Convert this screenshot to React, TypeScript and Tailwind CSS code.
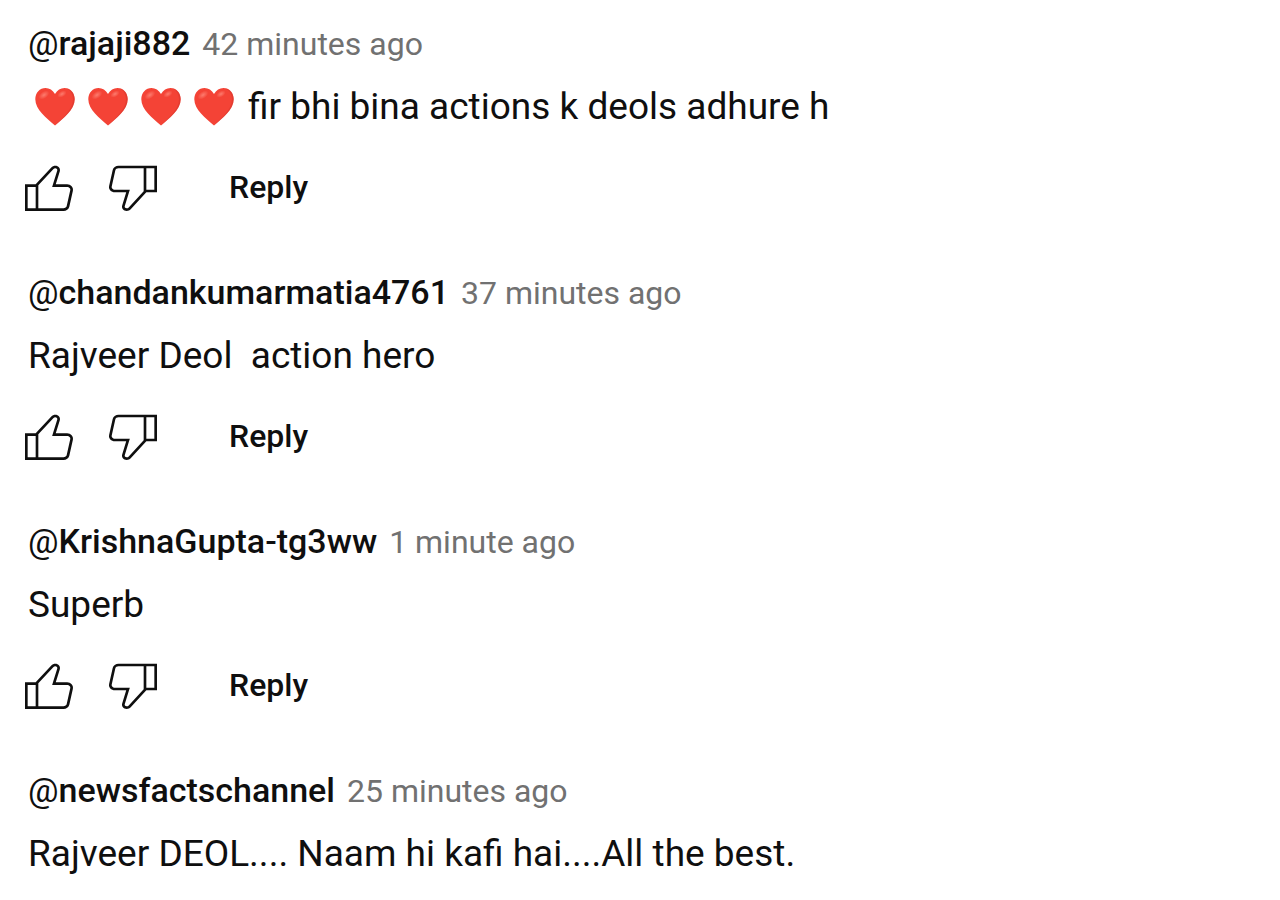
interface Comment {
  author: string;
  time: string;
  text: string;
  hearts?: number;
  showActions?: boolean;
}

const comments: Comment[] = [
  {
    author: "rajaji882",
    time: "42 minutes ago",
    text: "fir bhi bina actions k deols adhure h",
    hearts: 4,
  },
  {
    author: "chandankumarmatia4761",
    time: "37 minutes ago",
    text: "Rajveer Deol  action hero",
  },
  { author: "KrishnaGupta-tg3ww", time: "1 minute ago", text: "Superb" },
  {
    author: "newsfactschannel",
    time: "25 minutes ago",
    text: "Rajveer DEOL.... Naam hi kafi hai....All the best.",
    showActions: false,
  },
];

function HeartIcon() {
  return (
    <svg viewBox="0 0 40 38" className="h-[38px] w-10" aria-hidden="true">
      <defs>
        <radialGradient id="heart-shine" cx="0.5" cy="0.5" r="0.5">
          <stop offset="0" stopColor="#ff8a7c" stopOpacity="0.8" />
          <stop offset="1" stopColor="#ff8a7c" stopOpacity="0" />
        </radialGradient>
      </defs>
      <path
        fill="#f44336"
        d="M20 6C17.8 2 14.4 0 10.6 0 4.8 0 .3 4.8 .3 11.2c0 10.6 11.4 18.8 19.7 26.3 8.3-7.5 19.7-15.7 19.7-26.3C39.7 4.8 35.2 0 29.4 0 25.6 0 22.2 2 20 6z"
      />
      <path
        fill="#d8392f"
        d="M31 .2C36 .9 39.7 5.3 39.7 11.2c0 10.6-11.4 18.8-19.7 26.3 7-7.5 18-15.7 18-26.3C38 6 35 1.7 31 .2z"
        opacity="0.6"
      />
      <ellipse cx="9" cy="7" rx="6" ry="3.5" fill="url(#heart-shine)" transform="rotate(-35 9 7)" />
      <ellipse cx="27" cy="6" rx="5" ry="3" fill="url(#heart-shine)" transform="rotate(-30 27 6)" />
    </svg>
  );
}

function LikeIcon() {
  return (
    <svg viewBox="0 0 24 24" className="size-16" fill="currentColor" aria-hidden="true">
      <path d="M18.77,11h-4.23l1.52-4.94C16.38,5.03,15.54,4,14.38,4c-0.58,0-1.14,0.24-1.52,0.65L7,11H3v10h4h1h9.43c1.06,0,1.98-0.67,2.19-1.61l1.34-6C21.23,12.15,20.18,11,18.77,11z M7,20H4v-8h3V20z M19.98,13.17l-1.34,6C18.54,19.65,18.03,20,17.43,20H8v-8.61l5.6-6.06C13.79,5.12,14.08,5,14.38,5c0.26,0,0.5,0.11,0.63,0.3c0.07,0.1,0.15,0.26,0.09,0.47l-1.52,4.94L13.18,12h1.35h4.23c0.41,0,0.8,0.17,1.03,0.46C19.92,12.61,20.05,12.86,19.98,13.17z" />
    </svg>
  );
}

function DislikeIcon() {
  return (
    <svg viewBox="0 0 24 24" className="size-16" fill="currentColor" aria-hidden="true">
      <path d="M17,4h-1H6.57C5.5,4,4.59,4.67,4.38,5.61l-1.34,6C2.77,12.85,3.82,14,5.23,14h4.23l-1.52,4.94C7.62,19.97,8.46,21,9.62,21c0.58,0,1.14-0.24,1.52-0.65L17,14h4V4H17z M10.4,19.67C10.21,19.88,9.92,20,9.62,20c-0.26,0-0.5-0.11-0.63-0.3c-0.07-0.1-0.15-0.26-0.09-0.47l1.52-4.94L10.82,13H5.23c-0.41,0-0.8-0.17-1.03-0.46c-0.12-0.15-0.25-0.4-0.18-0.72l1.34-6C5.46,5.35,5.97,5,6.57,5H16v8.61L10.4,19.67z M20,13h-3V5h3V13z" />
    </svg>
  );
}

function CommentItem({ author, time, text, hearts = 0, showActions = true }: Comment) {
  return (
    <article>
      <header className="flex items-baseline gap-3 px-7 leading-10">
        <a href={`#${author}`} className="text-[34px] font-medium">
          <span className="font-normal">@</span>
          {author}
        </a>
        <span className="text-[32px] text-[#717171]">{time}</span>
      </header>
      <div className="mt-[17px] flex items-center px-7">
        {hearts > 0 && (
          <span className="mr-[14px] ml-[7px] flex gap-[13px]" role="img" aria-label="Red hearts">
            {Array.from({ length: hearts }, (_, i) => (
              <HeartIcon key={i} />
            ))}
          </span>
        )}
        <p className="text-[37px] leading-[52px] whitespace-pre-wrap">{text}</p>
      </div>
      {showActions && (
        <div className="mt-[22px] flex items-center px-[17px]">
          <button type="button" aria-label="Like">
            <LikeIcon />
          </button>
          <button type="button" aria-label="Dislike" className="ml-5">
            <DislikeIcon />
          </button>
          <button type="button" className="ml-16 text-[32px] leading-9 font-medium">
            Reply
          </button>
        </div>
      )}
    </article>
  );
}

export default function App() {
  return (
    <main className="flex flex-col gap-[53px] bg-white pt-[23px] font-[Roboto,sans-serif] text-[#0f0f0f]">
      {comments.map((comment) => (
        <CommentItem key={comment.author} {...comment} />
      ))}
    </main>
  );
}
